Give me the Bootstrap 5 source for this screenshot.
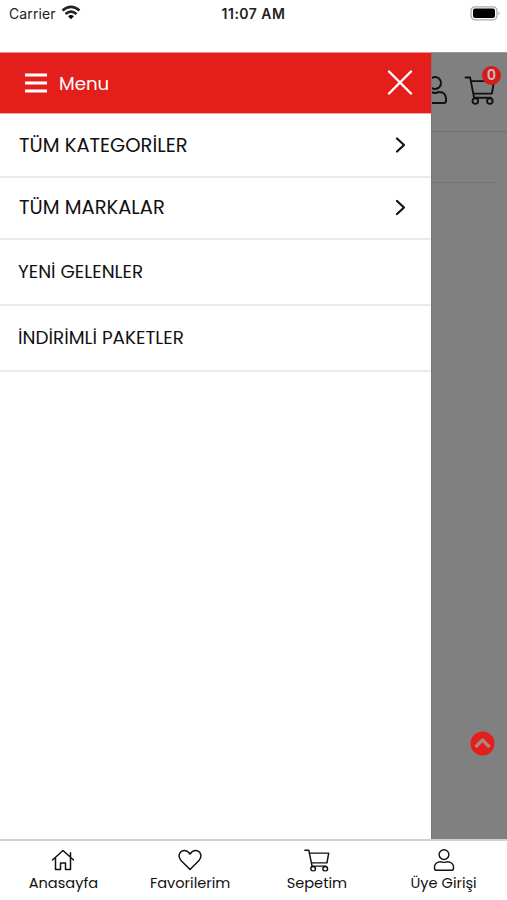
<!DOCTYPE html>
<html lang="tr">
<head>
<meta charset="utf-8">
<meta name="viewport" content="width=device-width, initial-scale=1">
<title>Menu</title>
<link href="https://cdn.jsdelivr.net/npm/bootstrap@5.3.0/dist/css/bootstrap.min.css" rel="stylesheet">
<style>
body{font-family:"Poppins","Inter",sans-serif;color:#111;background:#fff}
svg{display:block;flex:none;fill:none;stroke:currentColor;stroke-linecap:round;stroke-linejoin:round}
.app{height:900px;width:507px}
.status{height:52px;font-family:"Inter",sans-serif;line-height:28px;font-size:14px;color:#222}
.status .carrier{margin-left:9px;letter-spacing:.12px}
.status .clock{left:0;width:507px;font-weight:600;letter-spacing:.48px}
.drawer{width:431px}
.drawer-head{height:62px;background:#e41e1b;border-top:1px solid #ef8f8d;border-bottom:1px solid #f3a5a4;padding:0 18px 0 25px}
.drawer-head .title{font-size:18.2px;margin-left:12px;line-height:24px;padding-top:1px}
.list-group-flush>.entry,.list-group-flush>.entry:last-child{border:0;border-bottom:2px solid #ebebeb;border-radius:0;padding:0 24px 0 19px;color:#111;background:#fff}
.e1{height:64px;font-size:19.5px}.e2{height:62px;font-size:19.5px}
.e1 span{padding-top:1px}
.e3{height:66px;font-size:18.4px}
.list-group-flush>.entry.e3{padding-left:18px}
.dim{background:#808080;border-top:1px solid #999;border-left:1px solid #777}
.dim-head{height:79px;border-bottom:1px solid #6d6d6d}
.dim-line{height:51px;border-bottom:1px solid #737373;margin-right:11px}
.count{left:50px;top:13px;width:19px;height:19px;background:#d41c1a;color:#c9b9b9;font-size:14.5px;line-height:19px;font-weight:600}
.person{left:-9px;top:23px}.basket{left:32px;top:23px}
.totop{margin:auto 12px 83px auto}
.tabs{height:61px;border-top:2px solid #d2d2d2;font-size:14.6px}
.tabs a{color:#111;line-height:18px;padding-top:8px}
.tabs svg{margin-bottom:3px}
</style>
</head>
<body>
<svg width="0" height="0" class="position-absolute">
<symbol id="cart" viewBox="0 0 30 28"><path d="M1 1.500H5.500L9.300 21H25.500M6.300 5H28.500L26.500 17H8.500"/><circle cx="10.500" cy="24.200" r="2.700"/><circle cx="24.500" cy="24.200" r="2.700"/></symbol>
<symbol id="user" viewBox="0 0 24 28"><circle cx="12" cy="7" r="6"/><path d="M7.500 16C3.500 16 1 19 1 23V25Q1 27 3 27H21Q23 27 23 25V23C23 19 20.500 16 16.500 16C14.500 16 14 17 12 17S9.500 16 7.500 16Z"/></symbol>
</svg>
<div class="app d-flex flex-column overflow-hidden">
<header class="status d-flex position-relative">
<span class="carrier">Carrier</span>
<svg style="margin-top:5px;margin-left:5px" width="20" height="15" viewBox="0 0 20 15" stroke="#000" stroke-width="2.600"><path stroke-linecap="butt" d="M1.500 5.600Q10-1.800 18.500 5.600M4.500 9Q10 4.200 15.500 9"/><path d="M7.100 11.200Q10 9 12.900 11.200L10 14.300Z" fill="#000" stroke="none"/></svg>
<span class="clock position-absolute text-center">11:07 AM</span>
<svg class="ms-auto" style="margin-top:6px;margin-right:5px" width="32" height="15" viewBox="0 0 32 15"><rect x="1" y=".8" width="26" height="13" rx="4" stroke="#aaa" stroke-width="1.300"/><rect x="3" y="2.500" width="22" height="9.500" rx="2" fill="#000" stroke="none"/><path d="M28.500 5.200Q31 7.200 28.500 9.200Z" fill="#aaa" stroke="none"/></svg>
</header>
<main class="d-flex flex-fill">
<nav class="drawer d-flex flex-column">
<div class="drawer-head d-flex align-items-center text-white">
<svg width="22" height="20" viewBox="0 0 22 20" stroke-width="3.200"><path stroke-linecap="butt" d="M0 2H22M0 10H22M0 18H22"/></svg>
<span class="title">Menu</span>
<svg class="ms-auto" width="26" height="26" viewBox="0 0 26 26" stroke-width="2.400"><path d="M2 1.500L24 23.500M24 1.500L2 23.500"/></svg>
</div>
<div class="list-group list-group-flush">
<a class="list-group-item entry e1 d-flex align-items-center justify-content-between"><span>TÜM KATEGORİLER</span><svg width="12" height="18" viewBox="0 0 12 18" stroke-width="2.200"><path d="M2 2.500L9 9L2 15.500"/></svg></a>
<a class="list-group-item entry e2 d-flex align-items-center justify-content-between"><span>TÜM MARKALAR</span><svg width="12" height="18" viewBox="0 0 12 18" stroke-width="2.200"><path d="M2 2L9 8.500L2 15"/></svg></a>
<a class="list-group-item entry e3 d-flex align-items-center"><span>YENİ GELENLER</span></a>
<a class="list-group-item entry e3 d-flex align-items-center"><span>İNDİRİMLİ PAKETLER</span></a>
</div>
</nav>
<section class="dim flex-fill d-flex flex-column position-relative overflow-hidden">
<div class="dim-head">
<svg class="person position-absolute" width="24" height="28" stroke-width="2"><use href="#user"/></svg>
<svg class="basket position-absolute" width="32" height="29" stroke-width="1.800"><use href="#cart"/></svg>
<span class="count position-absolute rounded-circle text-center">0</span>
</div>
<div class="dim-line"></div>
<svg class="totop" width="25" height="25" viewBox="0 0 25 25"><circle cx="12.500" cy="12.500" r="12" fill="#e41e1b" stroke="none"/><path d="M5.500 16L12.500 9L19.500 16" stroke="#a98884" stroke-width="3.200" stroke-linecap="butt"/></svg>
</section>
</main>
<footer class="tabs d-flex bg-white">
<a class="col-3 d-flex flex-column align-items-center text-decoration-none"><svg width="24" height="22" viewBox="0 0 24 22" stroke-width="1.500"><path d="M1.500 11L12 1.500L22.500 11M19.500 7.500V3.800M4.500 9V20.500H9.500V14H14.500V20.500H19.500V9"/></svg><span>Anasayfa</span></a>
<a class="col-3 d-flex flex-column align-items-center text-decoration-none"><svg width="24" height="22" viewBox="0 0 24 22" stroke-width="1.500"><path d="M12 20.500L3 11.500C-1 7 2 1.500 6.500 1.500C9.500 1.500 11 3.500 12 5C13 3.500 14.500 1.500 17.500 1.500C22 1.500 25 7 21 11.500Z"/></svg><span>Favorilerim</span></a>
<a class="col-3 d-flex flex-column align-items-center text-decoration-none"><svg width="26" height="22" viewBox="0 0 30 27" preserveAspectRatio="none" stroke-width="1.700" overflow="visible"><use href="#cart" width="30" height="28"/></svg><span>Sepetim</span></a>
<a class="col-3 d-flex flex-column align-items-center text-decoration-none"><svg width="22" height="22" viewBox="0 0 22 22" stroke-width="1.400"><circle cx="11" cy="5.600" r="4.900"/><path d="M7.500 12.700C4 12.700 1.500 15 1.500 18V19.500Q1.500 21.300 3.300 21.300H18.700Q20.500 21.300 20.500 19.500V18C20.500 15 18 12.700 14.500 12.700C13 12.700 12.500 13.400 11 13.400S9 12.700 7.500 12.700Z"/></svg><span>Üye Girişi</span></a>
</footer>
</div>
<script src="https://cdn.jsdelivr.net/npm/bootstrap@5.3.0/dist/js/bootstrap.bundle.min.js"></script>
</body>
</html>
